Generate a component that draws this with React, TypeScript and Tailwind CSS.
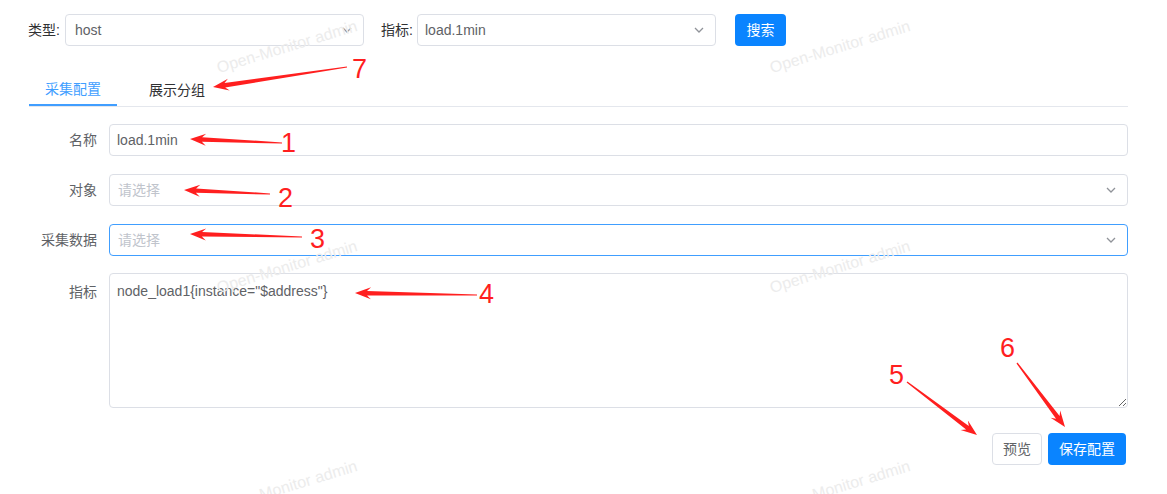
import React from "react";

const Chevron = () => (
  <svg width="10" height="6" viewBox="0 0 10 6" className="shrink-0">
    <path d="M1 1 L5 5 L9 1" fill="none" stroke="#909399" strokeWidth="1.3" />
  </svg>
);

// tapered annotation arrow, tail -> head
const arrowPoints = (tx: number, ty: number, hx: number, hy: number) => {
  const dx = hx - tx;
  const dy = hy - ty;
  const len = Math.hypot(dx, dy);
  const ux = dx / len;
  const uy = dy / len;
  const nx = -uy;
  const ny = ux;
  const neck = 12;
  const headLen = 16;
  const headW = 6;
  const w0 = 0.6;
  const w1 = 2.2;
  const nX = hx - ux * neck;
  const nY = hy - uy * neck;
  const bX = hx - ux * headLen;
  const bY = hy - uy * headLen;
  const pts = [
    [tx + nx * w0, ty + ny * w0],
    [nX + nx * w1, nY + ny * w1],
    [bX + nx * headW, bY + ny * headW],
    [hx, hy],
    [bX - nx * headW, bY - ny * headW],
    [nX - nx * w1, nY - ny * w1],
    [tx - nx * w0, ty - ny * w0],
  ];
  return pts.map((p) => p.map((v) => v.toFixed(1)).join(",")).join(" ");
};

const arrows = [
  { t: [282, 143], h: [190, 139] },
  { t: [270, 194], h: [184, 190] },
  { t: [302, 237], h: [190, 234] },
  { t: [477, 295], h: [355, 293] },
  { t: [907, 382], h: [977, 435] },
  { t: [1017, 363], h: [1065, 427] },
  { t: [347, 67], h: [213, 87] },
];

const labels = [
  { n: "1", x: 281, y: 152 },
  { n: "2", x: 278, y: 207 },
  { n: "3", x: 310, y: 248 },
  { n: "4", x: 479, y: 303 },
  { n: "5", x: 889, y: 384 },
  { n: "6", x: 1000, y: 357 },
  { n: "7", x: 352, y: 78 },
];

const watermarks = [
  { x: 220, y: 77 },
  { x: 773, y: 77 },
  { x: 220, y: 297 },
  { x: 773, y: 297 },
  { x: 220, y: 517 },
  { x: 773, y: 517 },
];

const SelectBox = ({ value, placeholder, focused }: { value?: string; placeholder?: string; focused?: boolean }) => (
  <div
    className={`flex-1 h-[32px] rounded-[4px] border flex items-center justify-between pl-[8px] pr-[11px] ${
      focused ? "border-[#409eff]" : "border-[#dcdfe6]"
    }`}
  >
    {value ? (
      <span className="text-[14px] text-[#606266]">{value}</span>
    ) : (
      <span className="text-[14px] text-[#c0c4cc]">{placeholder}</span>
    )}
    <Chevron />
  </div>
);

const FormLabel = ({ children, top }: { children: React.ReactNode; top?: boolean }) => (
  <div
    className={`w-[80px] shrink-0 pr-[12px] text-right text-[14px] text-[#606266] leading-[18px] ${
      top ? "pt-[10px]" : ""
    }`}
  >
    {children}
  </div>
);

export default function App() {
  return (
    <div className="relative w-full h-[494px] overflow-hidden bg-white font-['Liberation_Sans','Noto_Sans_CJK_SC',sans-serif]">
      {/* search bar */}
      <div className="flex items-center pl-[28px] pt-[14px]">
        <span className="w-[37px] text-[14px] text-[#303133]">类型:</span>
        <div className="w-[299px] h-[32px] rounded-[4px] border border-[#dcdfe6] flex items-center justify-between pl-[9px] pr-[11px]">
          <span className="text-[14px] text-[#606266]">host</span>
          <Chevron />
        </div>
        <span className="ml-[17px] w-[36px] text-[14px] text-[#303133]">指标:</span>
        <div className="w-[299px] h-[32px] rounded-[4px] border border-[#dcdfe6] flex items-center justify-between pl-[7px] pr-[11px]">
          <span className="text-[14px] text-[#606266]">load.1min</span>
          <Chevron />
        </div>
        <button className="ml-[19px] w-[51px] h-[32px] rounded-[4px] bg-[#0a84ff] text-white text-[14px]">搜索</button>
      </div>

      {/* tabs */}
      <div className="mt-[28px] ml-[29px] mr-[39px] flex border-b border-[#e4e7ed]">
        <div className="h-[32px] px-[16px] flex items-center border-b-2 border-[#409eff] -mb-px text-[14px] text-[#409eff]">
          采集配置
        </div>
        <div className="h-[32px] ml-[16px] px-[16px] flex items-center text-[14px] text-[#303133]">展示分组</div>
      </div>

      {/* form */}
      <div className="mt-[17px] ml-[29px] mr-[39px] flex flex-col">
        <div className="flex items-center">
          <FormLabel>名称</FormLabel>
          <div className="flex-1 h-[32px] rounded-[4px] border border-[#dcdfe6] flex items-center px-[7px] text-[14px] text-[#606266]">
            load.1min
          </div>
        </div>
        <div className="flex items-center mt-[18px]">
          <FormLabel>对象</FormLabel>
          <SelectBox placeholder="请选择" />
        </div>
        <div className="flex items-center mt-[18px]">
          <FormLabel>采集数据</FormLabel>
          <SelectBox placeholder="请选择" focused />
        </div>
        <div className="flex items-start mt-[17px]">
          <FormLabel top>指标</FormLabel>
          <textarea
            readOnly
            defaultValue={'node_load1{instance="$address"}'}
            className="flex-1 h-[135px] rounded-[4px] border border-[#dcdfe6] px-[7px] py-[8px] text-[14px] leading-[18px] text-[#606266] resize-y outline-none"
          />
        </div>
        <div className="flex justify-end gap-[6px] mt-[25px] pr-[2px]">
          <button className="w-[50px] h-[32px] rounded-[4px] border border-[#dcdfe6] bg-white text-[14px] text-[#606266]">
            预览
          </button>
          <button className="w-[78px] h-[32px] rounded-[4px] bg-[#0a84ff] text-[14px] text-white">保存配置</button>
        </div>
      </div>

      {/* watermark */}
      <div className="absolute inset-0 pointer-events-none">
        {watermarks.map((w, i) => (
          <span
            key={i}
            className="absolute whitespace-nowrap text-[16px] leading-[18px] text-[#ececec] origin-[0_100%] -rotate-[17deg]"
            style={{ left: w.x, top: w.y - 18 }}
          >
            Open-Monitor admin
          </span>
        ))}
      </div>

      {/* annotations */}
      <svg className="absolute inset-0 pointer-events-none" width="1167" height="494" viewBox="0 0 1167 494">
        {arrows.map((a, i) => (
          <polygon key={i} points={arrowPoints(a.t[0], a.t[1], a.h[0], a.h[1])} fill="#ff1f1f" />
        ))}
        {labels.map((l) => (
          <text key={l.n} x={l.x} y={l.y} fill="#ff1f1f" fontSize="27" fontFamily="Liberation Sans, sans-serif">
            {l.n}
          </text>
        ))}
      </svg>
    </div>
  );
}
